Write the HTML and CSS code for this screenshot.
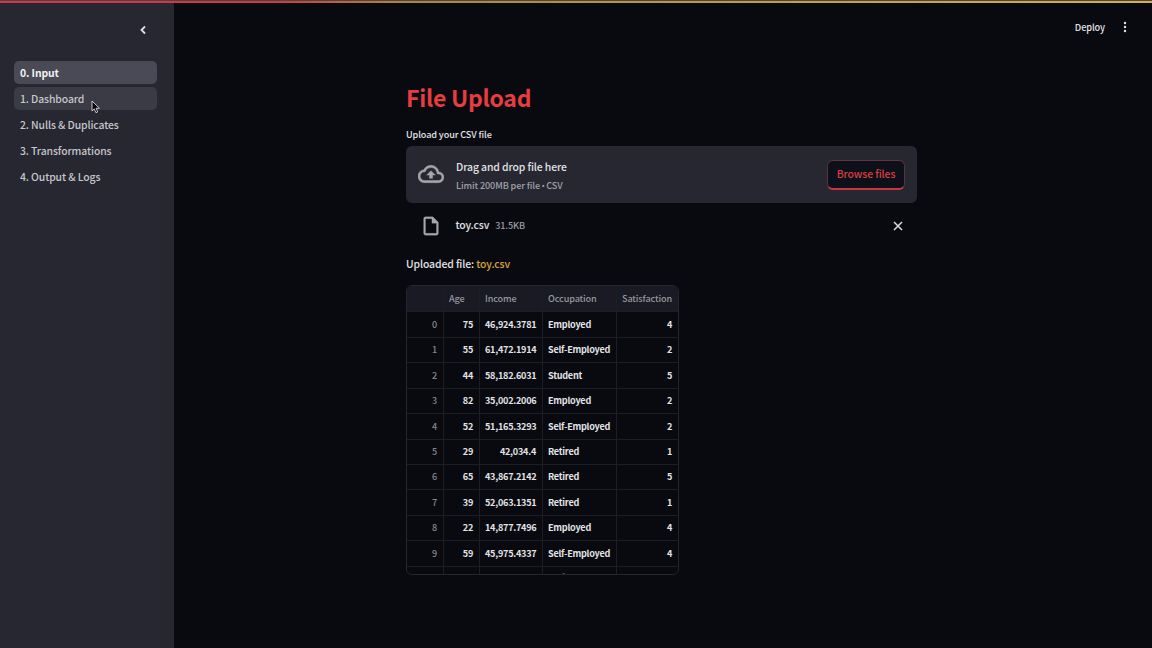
FILE: index.html
```html
<!DOCTYPE html>
<html lang="en">
<head>
<meta charset="utf-8">
<title>File Upload</title>
<link rel="stylesheet" href="styles.css">
</head>
<body>
<div class="decoration"></div>
<div class="app">
  <aside class="sidebar">
    <button class="collapse" aria-label="Collapse sidebar">
      <svg width="14" height="14" viewBox="0 0 14 14"><path d="M9 3.5 5.5 7 9 10.5" fill="none" stroke="currentColor" stroke-width="1.8"/></svg>
    </button>
    <nav class="nav">
      <a class="nav-item active"><span>0. Input</span></a>
      <a class="nav-item hover"><span>1. Dashboard</span></a>
      <a class="nav-item"><span>2. Nulls &amp; Duplicates</span></a>
      <a class="nav-item"><span>3. Transformations</span></a>
      <a class="nav-item"><span>4. Output &amp; Logs</span></a>
    </nav>
  </aside>
  <div class="page">
    <header class="toolbar">
      <span class="deploy">Deploy</span>
      <svg width="4" height="12" viewBox="0 0 4 12" fill="currentColor"><circle cx="2" cy="2" r="1.2"/><circle cx="2" cy="6" r="1.2"/><circle cx="2" cy="10" r="1.2"/></svg>
    </header>
    <main class="content">
      <h1 class="title"><span>File Upload</span></h1>
      <div class="label"><span>Upload your CSV file</span></div>
      <section class="dropzone">
        <svg class="cloud" width="26" height="26" viewBox="0 0 24 24" fill="currentColor" stroke="currentColor" stroke-width=".4"><path d="M19.35 10.04A7.49 7.49 0 0 0 12 4C9.11 4 6.6 5.64 5.35 8.04A5.994 5.994 0 0 0 0 14c0 3.31 2.69 6 6 6h13c2.76 0 5-2.24 5-5 0-2.64-2.05-4.78-4.65-4.96zM19 18H6c-2.21 0-4-1.79-4-4 0-2.05 1.53-3.76 3.56-3.97l1.07-.11.5-.95A5.469 5.469 0 0 1 12 6c2.62 0 4.88 1.86 5.39 4.43l.3 1.5 1.53.11A2.98 2.98 0 0 1 22 15c0 1.65-1.35 3-3 3zM8 13h2.55v3h2.9v-3H16l-4-4z"/></svg>
        <div class="drop-text">
          <span class="drop-title">Drag and drop file here</span>
          <span class="drop-limit">Limit 200MB per file <span class="bullet">•</span> CSV</span>
        </div>
        <button class="browse"><span>Browse files</span></button>
      </section>
      <div class="file">
        <svg class="file-icon" width="22" height="22" viewBox="0 0 24 24" fill="currentColor" stroke="currentColor" stroke-width=".3"><path d="M14 2H6c-1.1 0-2 .9-2 2v16c0 1.1.9 2 2 2h12c1.1 0 2-.9 2-2V8l-6-6zM6 20V4h7v5h5v11H6z"/></svg>
        <span class="file-name">toy.csv</span>
        <span class="file-size">31.5KB</span>
        <svg class="remove" width="10" height="10" viewBox="0 0 10 10"><path d="m1 1 8 8M9 1 1 9" stroke="currentColor" stroke-width="1.5"/></svg>
      </div>
      <p class="uploaded"><span>Uploaded file: <b>toy.csv</b></span></p>
      <div class="table">
        <div class="row head"><span></span><span>Age</span><span>Income</span><span>Occupation</span><span>Satisfaction</span></div>
        <div class="row"><span>0</span><span>75</span><span>46,924.3781</span><span>Employed</span><span>4</span></div>
        <div class="row"><span>1</span><span>55</span><span>61,472.1914</span><span>Self-Employed</span><span>2</span></div>
        <div class="row"><span>2</span><span>44</span><span>58,182.6031</span><span>Student</span><span>5</span></div>
        <div class="row"><span>3</span><span>82</span><span>35,002.2006</span><span>Employed</span><span>2</span></div>
        <div class="row"><span>4</span><span>52</span><span>51,165.3293</span><span>Self-Employed</span><span>2</span></div>
        <div class="row"><span>5</span><span>29</span><span>42,034.4</span><span>Retired</span><span>1</span></div>
        <div class="row"><span>6</span><span>65</span><span>43,867.2142</span><span>Retired</span><span>5</span></div>
        <div class="row"><span>7</span><span>39</span><span>52,063.1351</span><span>Retired</span><span>1</span></div>
        <div class="row"><span>8</span><span>22</span><span>14,877.7496</span><span>Employed</span><span>4</span></div>
        <div class="row"><span>9</span><span>59</span><span>45,975.4337</span><span>Self-Employed</span><span>4</span></div>
        <div class="row"><span></span><span></span><span></span><span>Retired</span><span></span></div>
      </div>
    </main>
  </div>
</div>
<svg class="cursor" width="10" height="14" viewBox="0 0 10 14"><path d="M1 1v10l2.3-2.1 1.6 3.8 1.8-.8L5.1 8.2h3.3z" fill="#08080c" stroke="#d8d8dc" stroke-width=".9"/></svg>
</body>
</html>
```
FILE: styles.css
```css
* { box-sizing: border-box; }
body {
  margin: 0;
  height: 648px;
  overflow: hidden;
  display: flex;
  flex-direction: column;
  background: #090a0f;
  color: #e3e3e6;
  font-family: "Noto Sans CJK SC", "Open Sans", sans-serif;
  font-size: 10.4px;
  font-weight: 500;
  line-height: 16px;
  letter-spacing: -0.1px;
  white-space: nowrap;
}
button { font: inherit; letter-spacing: inherit; color: inherit; background: none; border: 0; padding: 0; }
svg { display: block; flex: none; }

.decoration {
  height: 3px;
  flex: none;
  border-top: 1px solid #45464f;
  background: linear-gradient(90deg, #d4373e 0, #d4373e 24%, #b3813c 34%, #c79a3e 65%, #dcae45 100%);
}
.app { flex: 1; display: flex; min-height: 0; }
.sidebar { width: 174px; background: #262730; padding: 20px 17px 0 14px; }
.collapse { display: block; margin-left: 122px; color: #e0e0e3; }
.nav { display: flex; flex-direction: column; gap: 3px; margin-top: 24px; }
.nav-item {
  height: 23.2px;
  padding-left: 6px;
  display: flex;
  align-items: center;
  border-radius: 5px;
  color: #c6c6cb;
}
.nav-item.active { background: #494a55; color: #f0f0f2; font-weight: 700; }
.nav-item.hover { background: #3a3b45; }

.page { flex: 1; display: flex; flex-direction: column; }
.toolbar {
  height: 48px;
  padding-right: 25px;
  display: flex;
  justify-content: flex-end;
  align-items: center;
  gap: 18px;
}
.deploy { font-size: 9.2px; }
.content { width: 511px; margin: 27px 0 0 232px; }
.title {
  margin: 0;
  height: 38px;
  line-height: 38px;
  font-size: 23px;
  font-weight: 700;
  letter-spacing: -0.25px;
  color: #e63d40;
}
.label { margin-top: 10px; font-size: 9.1px; letter-spacing: -0.1px; }
.dropzone {
  height: 57px;
  margin-top: 4px;
  padding: 0 12px;
  display: flex;
  align-items: center;
  gap: 12px;
  border-radius: 6px;
  background: #262730;
}
.cloud, .file-icon { color: #a6a7ad; }
.cloud { margin-top: -1px; }
.drop-text { flex: 1; display: flex; flex-direction: column; gap: 2px; padding-top: 2px; }
.drop-limit { font-size: 9.1px; color: #a0a1a8; }
.bullet { font-family: "Open Sans", sans-serif; font-size: 9px; line-height: 1; margin: 0 -0.5px; }
.browse {
  width: 78px;
  height: 30px;
  padding-bottom: 1px;
  border: 1px solid #55343f;
  border-top-color: #63363f;
  border-bottom: 2px solid #c9363c;
  border-radius: 6px;
  background: #0d1018;
  color: #dc3e43;
}
.file { height: 46px; padding: 0 14px; display: flex; align-items: center; }
.file-name { margin: -2px 0 0 13.5px; }
.file-size { margin: -2px 0 0 6px; font-size: 9.1px; color: #9b9ca3; }
.remove { margin-left: auto; color: #dedee1; }
.uploaded { margin: 7px 0 0; }
.uploaded b { font-weight: 500; color: #d9a43d; }

.table {
  width: 273px;
  height: 290px;
  margin-top: 13px;
  overflow: hidden;
  border: 1px solid #25262c;
  border-radius: 6px;
  font-size: 9.1px;
}
.row {
  height: 25.4px;
  display: grid;
  grid-template-columns: 37px 36px 63px 74px 61px;
  font-weight: 600;
  letter-spacing: -0.25px;
}
.row > span {
  padding: 0 6px 0 5px;
  text-align: right;
  line-height: 25px;
  border-bottom: 1px solid #1d1e24;
  border-right: 1px solid #1d1e24;
}
.row > span:last-child { border-right: 0; }
.row > span:first-child { color: #85868d; font-weight: 500; }
.row > span:nth-child(4) { text-align: left; }
.row.head { height: 26px; letter-spacing: -0.12px; }
.row.head > span {
  padding: 0 5px;
  text-align: left;
  color: #96979e;
  font-weight: 500;
  background: #191a23;
}
.row:last-child > span { line-height: 24px; }
.cursor { position: absolute; left: 91px; top: 100px; }
```
